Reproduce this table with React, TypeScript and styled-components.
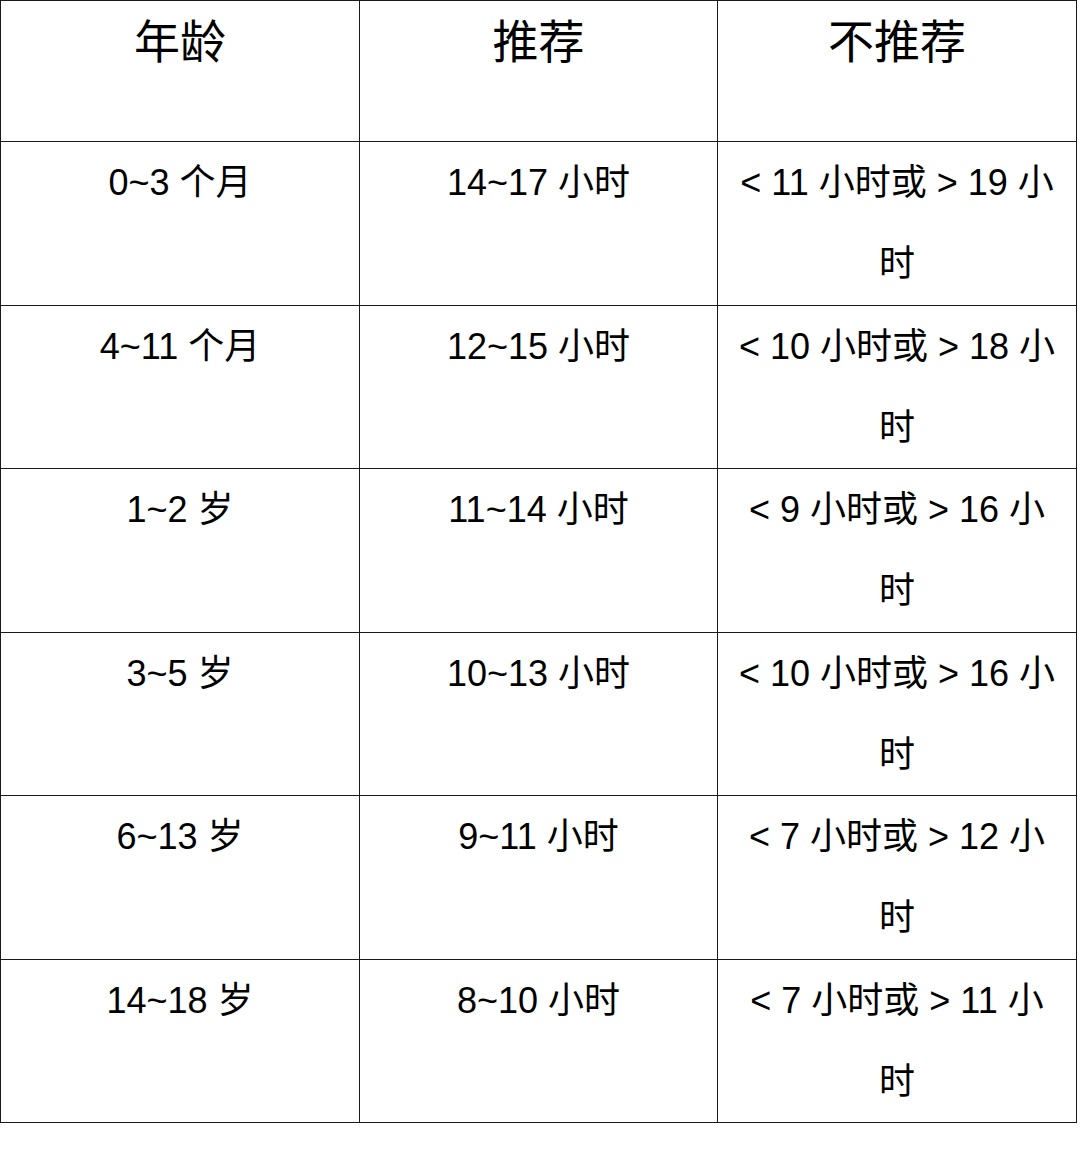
import styled, { createGlobalStyle } from 'styled-components';

const GlobalStyle = createGlobalStyle`
  html, body {
    margin: 0;
    padding: 0;
    background: #ffffff;
  }
  body {
    font-family: "Liberation Sans", "Noto Sans CJK SC", sans-serif;
    color: #000000;
  }
`;

type TRow = {
  age: string;
  recommended: string;
  notRecommended: string;
};

const rows: TRow[] = [
  { age: '0~3 个月', recommended: '14~17 小时', notRecommended: '< 11 小时或 > 19 小时' },
  { age: '4~11 个月', recommended: '12~15 小时', notRecommended: '< 10 小时或 > 18 小时' },
  { age: '1~2 岁', recommended: '11~14 小时', notRecommended: '< 9 小时或 > 16 小时' },
  { age: '3~5 岁', recommended: '10~13 小时', notRecommended: '< 10 小时或 > 16 小时' },
  { age: '6~13 岁', recommended: '9~11 小时', notRecommended: '< 7 小时或 > 12 小时' },
  { age: '14~18 岁', recommended: '8~10 小时', notRecommended: '< 7 小时或 > 11 小时' },
];

export default function App() {
  return (
    <>
      <GlobalStyle />
      <Page>
        <SleepTable>
          <colgroup>
            <col style={{ width: 359 }} />
            <col style={{ width: 358 }} />
            <col style={{ width: 359 }} />
          </colgroup>
          <thead>
            <tr>
              <HeadCell>{'年龄'}</HeadCell>
              <HeadCell>{'推荐'}</HeadCell>
              <HeadCell>{'不推荐'}</HeadCell>
            </tr>
          </thead>
          <tbody>
            {rows.map((row) => (
              <tr key={row.age}>
                <BodyCell>{row.age}</BodyCell>
                <BodyCell>{row.recommended}</BodyCell>
                <BodyCell>{row.notRecommended}</BodyCell>
              </tr>
            ))}
          </tbody>
        </SleepTable>
      </Page>
    </>
  );
}

const Page = styled.div`
  width: 1080px;
  height: 1165px;
  background: #ffffff;
`;

const SleepTable = styled.table`
  border-collapse: collapse;
  table-layout: fixed;
  width: 1076px;
  margin: 0;
`;

const HeadCell = styled.th`
  border: 1px solid #1a1a1a;
  height: 140px;
  padding: 0 4px;
  vertical-align: top;
  text-align: center;
  font-weight: 400;
  font-size: 46px;
  line-height: 82px;
`;

const BodyCell = styled.td`
  border: 1px solid #1a1a1a;
  padding: 0 18px;
  vertical-align: top;
  text-align: center;
  font-size: 36px;
  line-height: 81.25px;
`;
